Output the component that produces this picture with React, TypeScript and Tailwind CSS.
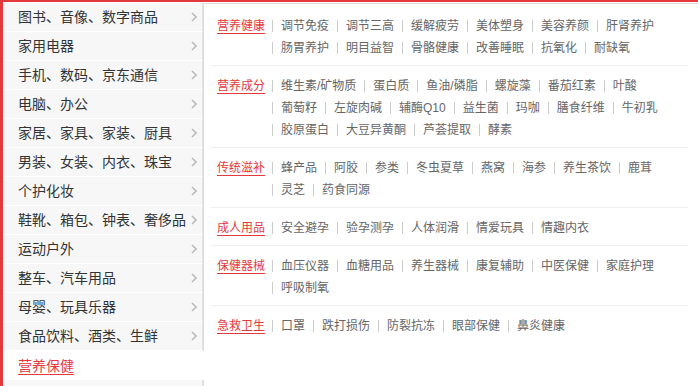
import React from "react";

const menu = [
  "图书、音像、数字商品",
  "家用电器",
  "手机、数码、京东通信",
  "电脑、办公",
  "家居、家具、家装、厨具",
  "男装、女装、内衣、珠宝",
  "个护化妆",
  "鞋靴、箱包、钟表、奢侈品",
  "运动户外",
  "整车、汽车用品",
  "母婴、玩具乐器",
  "食品饮料、酒类、生鲜",
];

const sections = [
  {
    title: "营养健康",
    items: ["调节免疫", "调节三高", "缓解疲劳", "美体塑身", "美容养颜", "肝肾养护", "肠胃养护", "明目益智", "骨骼健康", "改善睡眠", "抗氧化", "耐缺氧"],
  },
  {
    title: "营养成分",
    items: ["维生素/矿物质", "蛋白质", "鱼油/磷脂", "螺旋藻", "番茄红素", "叶酸", "葡萄籽", "左旋肉碱", "辅酶Q10", "益生菌", "玛咖", "膳食纤维", "牛初乳", "胶原蛋白", "大豆异黄酮", "芦荟提取", "酵素"],
  },
  {
    title: "传统滋补",
    items: ["蜂产品", "阿胶", "参类", "冬虫夏草", "燕窝", "海参", "养生茶饮", "鹿茸", "灵芝", "药食同源"],
  },
  {
    title: "成人用品",
    items: ["安全避孕", "验孕测孕", "人体润滑", "情爱玩具", "情趣内衣"],
  },
  {
    title: "保健器械",
    items: ["血压仪器", "血糖用品", "养生器械", "康复辅助", "中医保健", "家庭护理", "呼吸制氧"],
  },
  {
    title: "急救卫生",
    items: ["口罩", "跌打损伤", "防裂抗冻", "眼部保健", "鼻炎健康"],
  },
];

function Chevron() {
  return (
    <svg width="6" height="10" viewBox="0 0 6 10" className="shrink-0">
      <path d="M1 1 L5 5 L1 9" fill="none" stroke="#bbbbbb" strokeWidth="1.6" />
    </svg>
  );
}

export default function App() {
  return (
    <div
      className="w-[698px] h-[386px] overflow-hidden bg-white flex flex-col"
      style={{ fontFamily: '"Liberation Sans", "Noto Sans CJK SC", sans-serif' }}
    >
      <div className="h-[2px] bg-[#e4393c] shrink-0" />
      <div className="flex flex-1 min-h-0 pt-px">
        {/* left menu */}
        <div className="w-[203px] shrink-0 border-l-[3px] border-[#e4393c] flex flex-col relative z-10 -mt-px pt-px">
          {menu.map((m) => (
            <div
              key={m}
              className="h-[29px] shrink-0 bg-[#f7f7f7] border-b border-white border-r border-r-[#e2e2e2] flex items-center justify-between pl-[15px] pr-[5px] text-[14px] text-[#333]"
            >
              <span className="leading-[16px]">{m}</span>
              <Chevron />
            </div>
          ))}
          <div className="h-[29px] shrink-0 bg-white w-[202px] flex items-center pl-[15px] text-[14px]">
            <span className="leading-[16px] text-[#e4393c] underline underline-offset-[3px]">营养保健</span>
          </div>
          <div className="h-[29px] shrink-0 bg-[#f7f7f7] border-r border-r-[#e2e2e2]" />
        </div>
        {/* panel */}
        <div className="flex-1 border-l border-t border-[#dddddd] pl-[7px] pr-[10px] text-[12px] bg-white">
          {sections.map((s, i) => (
            <div
              key={s.title}
              className={
                i === 0
                  ? "flex pl-[6px] pt-[11px] pb-[6px]"
                  : "flex pl-[6px] pt-[9px] pb-[6px] border-t border-[#eeeeee]"
              }
            >
              <div className="w-[55px] shrink-0 leading-[22px] text-[#e4393c] underline underline-offset-[3px]">
                {s.title}
              </div>
              <div className="flex-1 flex flex-wrap">
                {s.items.map((it) => (
                  <div key={it} className="h-[22px] flex items-center">
                    <span className="w-px h-[12px] bg-[#cccccc]" />
                    <span className="px-2 text-[#666] leading-[22px] whitespace-nowrap">{it}</span>
                  </div>
                ))}
              </div>
            </div>
          ))}
        </div>
      </div>
    </div>
  );
}
